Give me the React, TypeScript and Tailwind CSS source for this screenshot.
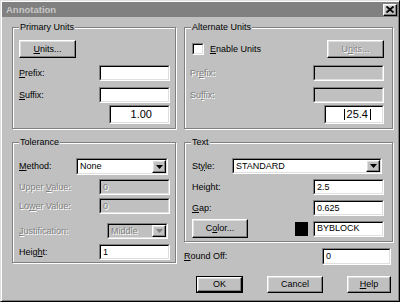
import React from "react";

const raised =
  "border border-t-white border-l-white border-b-black border-r-black shadow-[inset_-1px_-1px_0_#808080,inset_1px_1px_0_#dfdfdf] bg-[#c0c0c0]";
const dis = "text-[#808080] [text-shadow:1px_1px_0_#fff]";

function Field({
  className = "",
  disabled = false,
  children,
}: {
  className?: string;
  disabled?: boolean;
  children?: React.ReactNode;
}) {
  return (
    <div
      className={`border border-t-[#808080] border-l-[#808080] border-b-white border-r-white ${className}`}
    >
      <div
        className={`h-full w-full border border-t-black border-l-black border-b-[#dfdfdf] border-r-[#dfdfdf] flex items-center overflow-hidden ${
          disabled ? "bg-[#c0c0c0]" : "bg-white"
        }`}
      >
        {children}
      </div>
    </div>
  );
}

function Arrow({ disabled = false }: { disabled?: boolean }) {
  return (
    <div className={`h-full w-[14px] flex items-center justify-center ${raised}`}>
      <svg width="7" height="4" viewBox="0 0 7 4">
        <path d="M0 0h7L3.5 4z" fill={disabled ? "#808080" : "#000"} />
      </svg>
    </div>
  );
}

function Select({
  className = "",
  disabled = false,
  text,
}: {
  className?: string;
  disabled?: boolean;
  text: string;
}) {
  return (
    <Field className={className} disabled={disabled}>
      <span className={`flex-1 pl-[2px] ${disabled ? dis : ""}`}>{text}</span>
      <Arrow disabled={disabled} />
    </Field>
  );
}

function Btn({
  className = "",
  disabled = false,
  children,
}: {
  className?: string;
  disabled?: boolean;
  children: React.ReactNode;
}) {
  return (
    <div className={`flex items-center justify-center ${raised} ${disabled ? dis : ""} ${className}`}>
      {children}
    </div>
  );
}

function Group({
  title,
  className = "",
  children,
}: {
  title: React.ReactNode;
  className?: string;
  children?: React.ReactNode;
}) {
  return (
    <div
      className={`relative border border-[#808080] shadow-[inset_1px_1px_0_#fff,1px_1px_0_#fff] ${className}`}
    >
      <span className="absolute left-[6px] -top-[7px] bg-[#c0c0c0] px-[1px] leading-[12px]">
        {title}
      </span>
      {children}
    </div>
  );
}

export default function App() {
  return (
    <div className="w-[405px] h-[307px] bg-white font-['Liberation_Sans',Arial,sans-serif] text-[9px] text-black leading-none">
      <div className="w-[400px] h-[302px] bg-[#c0c0c0] border border-t-[#dfdfdf] border-l-[#dfdfdf] border-b-black border-r-black shadow-[inset_1px_1px_0_#fff,inset_-1px_-1px_0_#808080] p-[1px] flex flex-col">
        {/* title bar */}
        <div className="h-[15px] bg-[#808080] flex items-center justify-between pl-[4px] pr-[1px]">
          <span className="text-[#c8c8c8] font-bold text-[9.5px]">Annotation</span>
          <Btn className="w-[14px] h-[12px]">
            <svg width="8" height="7" viewBox="0 0 8 7">
              <path d="M0.5 0.5L7.5 6.5M7.5 0.5L0.5 6.5" stroke="#000" strokeWidth="1.8" />
            </svg>
          </Btn>
        </div>

        <div className="flex gap-[8px] pl-[10px] pt-[10px]">
          {/* left column */}
          <div className="w-[164px] flex flex-col">
            <Group title="Primary Units" className="h-[102px] pt-[12px] pl-[6px] pr-[5px] flex flex-col">
              <Btn className="w-[57px] h-[18px]">
                <span>
                  <u>U</u>nits...
                </span>
              </Btn>
              <div className="mt-[7px] flex items-center justify-between">
                <span>
                  <u>P</u>refix:
                </span>
                <Field className="w-[71px] h-[16px]" />
              </div>
              <div className="mt-[6px] flex items-center justify-between">
                <span>
                  <u>S</u>uffix:
                </span>
                <Field className="w-[71px] h-[16px]" />
              </div>
              <Field className="mt-[2px] self-end w-[61px] h-[19px]">
                <span className="w-full text-right pr-[16px] text-[11px]">1.00</span>
              </Field>
            </Group>

            <Group title="Tolerance" className="mt-[13px] h-[121px] pt-[15px] pl-[6px] pr-[5px] flex flex-col">
              <div className="flex items-center justify-between">
                <span>
                  <u>M</u>ethod:
                </span>
                <Select className="w-[92px] h-[17px] mr-[2px]" text="None" />
              </div>
              <div className="mt-[4px] flex items-center justify-between">
                <span className={dis}>
                  Upper <u>V</u>alue:
                </span>
                <Field className="w-[71px] h-[16px]" disabled>
                  <span className={`pl-[2px] ${dis}`}>0</span>
                </Field>
              </div>
              <div className="mt-[3px] flex items-center justify-between">
                <span className={dis}>
                  Lo<u>w</u>er Value:
                </span>
                <Field className="w-[71px] h-[16px]" disabled>
                  <span className={`pl-[2px] ${dis}`}>0</span>
                </Field>
              </div>
              <div className="mt-[9px] flex items-center justify-between">
                <span className={dis}>
                  <u>J</u>ustification:
                </span>
                <Select className="w-[61px] h-[16px] mr-[2px]" text="Middle" disabled />
              </div>
              <div className="mt-[5px] flex items-center justify-between">
                <span>
                  Heig<u>h</u>t:
                </span>
                <Field className="w-[71px] h-[16px]">
                  <span className="pl-[2px]">1</span>
                </Field>
              </div>
            </Group>
          </div>

          {/* right column */}
          <div className="w-[209px] flex flex-col">
            <Group title="Alternate Units" className="h-[102px] pt-[12px] pl-[5px] pr-[8px] flex flex-col">
              <div className="flex items-center justify-between">
                <div className="flex items-center ml-[2px] gap-[6px]">
                  <Field className="w-[12px] h-[12px]" />
                  <span>
                    <u>E</u>nable Units
                  </span>
                </div>
                <Btn className="w-[57px] h-[18px]" disabled>
                  <span>
                    U<u>n</u>its...
                  </span>
                </Btn>
              </div>
              <div className="mt-[7px] flex items-center justify-between">
                <span className={dis}>
                  Pr<u>e</u>fix:
                </span>
                <Field className="w-[71px] h-[16px]" disabled />
              </div>
              <div className="mt-[6px] flex items-center justify-between">
                <span className={dis}>
                  Su<u>f</u>fix:
                </span>
                <Field className="w-[71px] h-[16px]" disabled />
              </div>
              <Field className="mt-[2px] self-end w-[60px] h-[19px]">
                <span className="w-full flex justify-end pr-[11px] text-[11px]">
                  <span className="border-l border-r border-black px-[2px]">25.4</span>
                </span>
              </Field>
            </Group>

            <Group title="Text" className="mt-[13px] h-[100px] pt-[15px] pl-[7px] pr-[6px] flex flex-col">
              <div className="flex items-center justify-between">
                <span>
                  St<u>y</u>le:
                </span>
                <Select className="w-[150px] h-[16px] mr-[4px]" text="STANDARD" />
              </div>
              <div className="mt-[5px] flex items-center justify-between">
                <span>
                  Hei<u>g</u>ht:
                </span>
                <Field className="w-[71px] h-[16px] mr-[2px]">
                  <span className="pl-[2px]">2.5</span>
                </Field>
              </div>
              <div className="mt-[5px] flex items-center justify-between">
                <span>
                  <u>G</u>ap:
                </span>
                <Field className="w-[71px] h-[16px] mr-[2px]">
                  <span className="pl-[2px]">0.625</span>
                </Field>
              </div>
              <div className="mt-[3px] flex items-center justify-between">
                <Btn className="w-[56px] h-[19px]">
                  <span>
                    C<u>o</u>lor...
                  </span>
                </Btn>
                <div className="flex items-center gap-[5px] mr-[2px]">
                  <div className="w-[13px] h-[14px] bg-black" />
                  <Field className="w-[71px] h-[16px]">
                    <span className="pl-[2px]">BYBLOCK</span>
                  </Field>
                </div>
              </div>
            </Group>

            <div className="mt-[6px] flex items-center justify-between">
              <span>
                <u>R</u>ound Off:
              </span>
              <Field className="w-[69px] h-[17px] mr-[2px]">
                <span className="pl-[2px]">0</span>
              </Field>
            </div>

            <div className="mt-[11px] flex justify-end gap-[24px] mr-[2px]">
              <div className="border border-black">
                <Btn className="w-[45px] h-[15px]">OK</Btn>
              </div>
              <Btn className="w-[56px] h-[17px]">Cancel</Btn>
              <Btn className="w-[44px] h-[17px]">
                <span>
                  <u>H</u>elp
                </span>
              </Btn>
            </div>
          </div>
        </div>
      </div>
    </div>
  );
}
